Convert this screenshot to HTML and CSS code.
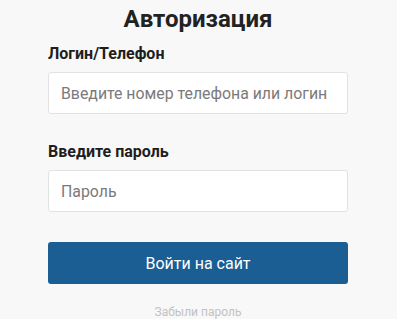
FILE: index.html
```html
<!DOCTYPE html>
<html lang="ru">
<head>
<meta charset="utf-8">
<link rel="stylesheet" href="styles.css">
</head>
<body>
<div class="auth">
  <h1 class="title">Авторизация</h1>
  <form class="form">
    <div class="field">
      <label class="label">Логин/Телефон</label>
      <input class="input" type="text" placeholder="Введите номер телефона или логин">
    </div>
    <div class="field">
      <label class="label">Введите пароль</label>
      <input class="input" type="password" placeholder="Пароль">
    </div>
    <button class="btn" type="button">Войти на сайт</button>
    <a class="forgot">Забыли пароль</a>
  </form>
</div>
</body>
</html>
```
FILE: styles.css
```css
html, body {
  margin: 0;
  padding: 0;
  background: #f8f8f8;
  font-family: Roboto, "Liberation Sans", sans-serif;
}
.auth {
  width: 300px;
  margin: 0 0 0 48px;
  padding-top: 5px;
}
.title {
  margin: 0;
  font-size: 24px;
  line-height: 28px;
  font-weight: 700;
  color: #222;
  text-align: center;
}
.form {
  display: flex;
  flex-direction: column;
}
.field {
  display: flex;
  flex-direction: column;
}
.field + .field {
  margin-top: 28px;
}
.label {
  margin-top: 11px;
  font-size: 16px;
  line-height: 20px;
  font-weight: 700;
  color: #1e1e1e;
}
.field + .field .label {
  margin-top: 0;
}
.input {
  box-sizing: border-box;
  margin-top: 8px;
  height: 42px;
  width: 300px;
  padding: 0 12px;
  border: 1px solid #e2e2e2;
  border-radius: 3px;
  background: #fff;
  font-family: Roboto, "Liberation Sans", sans-serif;
  font-size: 15.85px;
  color: #333;
  outline: none;
}
.input::placeholder {
  color: #7a7a7a;
}
.btn {
  margin-top: 30px;
  height: 42px;
  width: 300px;
  border: none;
  border-radius: 3px;
  background: #1a5e94;
  color: #fff;
  font-family: Roboto, "Liberation Sans", sans-serif;
  font-size: 16px;
}
.forgot {
  margin-top: 20px;
  text-align: center;
  font-size: 12px;
  line-height: 16px;
  color: #c2c2c2;
}
```
